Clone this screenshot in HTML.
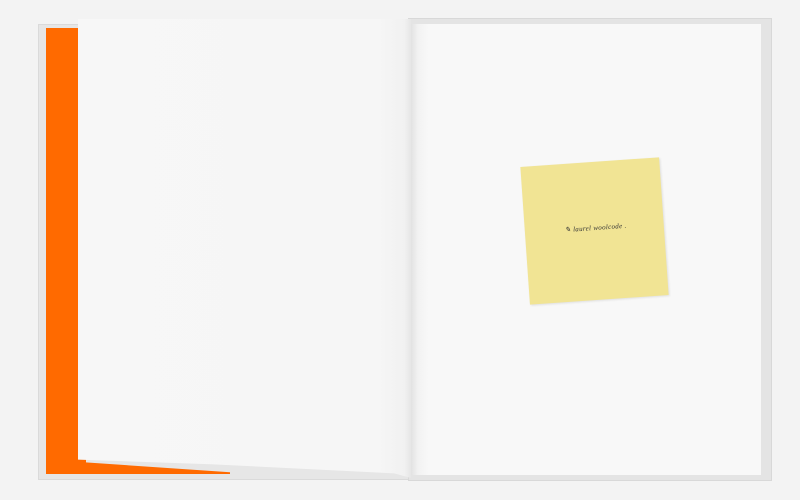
<!DOCTYPE html>
<html><head><style>
body{margin:0;width:800px;height:500px;background:#f3f3f3;position:relative;overflow:hidden;font-family:"Liberation Sans",sans-serif}
div{position:absolute;box-sizing:border-box}
</style></head><body>
<div style="left:38px;top:24px;width:374px;height:456px;background:#e6e6e6;border:1px solid #dadada"></div>
<div style="left:408px;top:18px;width:364px;height:463px;background:#e4e4e4;border:1px solid #d8d8d8"></div>
<div style="left:46px;top:28px;width:40px;height:446px;background:#ff6a00"></div>
<div style="left:80px;top:462px;width:150px;height:12px;background:#ff6a00;clip-path:polygon(0 0,100% 85%,100% 100%,0 100%)"></div>
<div style="left:78px;top:19px;width:333px;height:459px;background:linear-gradient(90deg,#f7f7f7 0%,#f6f6f6 90%,#f1f1f1 98%,#e6e6e6 100%);clip-path:polygon(0 0,100% 0,100% 100%,95% 99%,40% 97%,0 96%)"></div>
<div style="left:411px;top:24px;width:350px;height:451px;background:linear-gradient(90deg,#e2e2e2 0%,#f2f2f2 2%,#f8f8f8 5%,#f8f8f8 100%)"></div>
<div style="left:525px;top:162px;width:139px;height:138px;background:#f1e494;transform:rotate(-4deg);box-shadow:1px 1px 2px rgba(0,0,0,0.1)">
<span style="position:absolute;left:40px;top:62px;font-family:'Liberation Serif',serif;font-style:italic;font-size:7px;color:#333;letter-spacing:.3px">✎ laurel woolcode .</span>
</div>
</body></html>
